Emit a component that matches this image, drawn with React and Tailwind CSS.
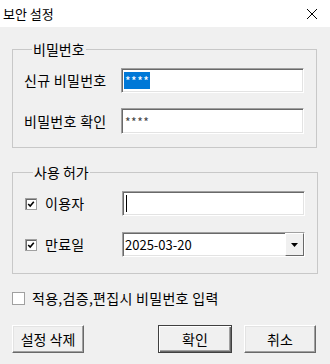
import React from "react";

const font = { fontFamily: '"Noto Sans CJK KR", "Noto Sans", sans-serif' };

function Sunken({ className = "", children }) {
  return (
    <div
      className={
        "bg-white border-t border-l border-[#a0a0a0] border-b border-r border-b-white border-r-white shadow-[inset_1px_1px_0_#696969,inset_-1px_-1px_0_#e3e3e3] " +
        className
      }
    >
      {children}
    </div>
  );
}

function Check({ checked }) {
  return (
    <div className="w-[12px] h-[12px] bg-white border border-[#a0a0a0] shadow-[inset_1px_1px_0_#696969] flex items-center justify-center">
      {checked && (
        <svg width="8" height="8" viewBox="0 0 8 8">
          <path d="M1.2 4 L3.2 6 L6.8 1.8" stroke="#000" strokeWidth="1.6" fill="none" />
        </svg>
      )}
    </div>
  );
}

function Button({ children, def, className = "" }) {
  return (
    <button
      className={
        "h-[28px] bg-[#f0f0f0] text-[14px] text-black flex items-center justify-center " +
        className +
        " " +
        (def
          ? "border border-[#404040] shadow-[inset_1px_1px_0_#fff,inset_-1px_-1px_0_#696969,inset_-2px_-2px_0_#a0a0a0]"
          : "border border-t-white border-l-white border-b-[#696969] border-r-[#696969] shadow-[inset_-1px_-1px_0_#a0a0a0,inset_1px_1px_0_#e3e3e3]")
      }
    >
      {children}
    </button>
  );
}

export default function App() {
  return (
    <div className="w-[330px] h-[364px] bg-[#f0f0f0] text-black flex flex-col" style={font}>
      <div className="h-[27px] bg-white flex items-center justify-between pl-[3px] pr-[12px]">
        <span className="text-[13px] leading-none">보안 설정</span>
        <svg width="12" height="12" viewBox="0 0 12 12">
          <path d="M1 1 L11 11 M11 1 L1 11" stroke="#000" strokeWidth="1" />
        </svg>
      </div>

      <div className="flex flex-col px-[12px] pt-[12px]">
        <fieldset className="border border-[#c8c8c8] w-[305px] pl-[11px] pb-[13px]">
          <legend className="ml-[8px] px-[1px] text-[14px] leading-[20px]">비밀번호</legend>
          <div className="grid grid-cols-[97px_183px] gap-y-[15px] items-center pt-[9px]">
            <span className="text-[14px] tracking-[0.3px]">신규 비밀번호</span>
            <Sunken className="h-[25px] flex items-center pl-[2px]">
              <span className="bg-[#0078d7] text-white text-[12px] leading-[17px] px-[1px] tracking-[0.5px]">****</span>
            </Sunken>
            <span className="text-[14px] tracking-[0.3px]">비밀번호 확인</span>
            <Sunken className="h-[26px] flex items-center pl-[3px]">
              <span className="text-[#444] text-[12px] leading-[17px] tracking-[0.5px]">****</span>
            </Sunken>
          </div>
        </fieldset>

        <fieldset className="border border-[#c8c8c8] w-[306px] mt-[14px] pl-[12px] pb-[16px]">
          <legend className="ml-[8px] px-[1px] text-[14px] leading-[20px]">사용 허가</legend>
          <div className="grid grid-cols-[97px_183px] gap-y-[16px] items-center pt-[9px]">
            <div className="flex items-center gap-[8px]">
              <Check checked />
              <span className="text-[14px] tracking-[0.3px]">이용자</span>
            </div>
            <Sunken className="h-[25px] flex items-center pl-[3px]">
              <div className="w-px h-[17px] bg-black" />
            </Sunken>
            <div className="flex items-center gap-[8px]">
              <Check checked />
              <span className="text-[14px] tracking-[0.3px]">만료일</span>
            </div>
            <Sunken className="h-[25px] flex items-center justify-between">
              <span className="text-[13px] pl-[2px]">2025-03-20</span>
              <div className="w-[19px] h-full bg-[#f0f0f0] border border-t-white border-l-white border-b-[#696969] border-r-[#696969] flex items-center justify-center">
                <svg width="7" height="4" viewBox="0 0 7 4">
                  <path d="M0 0 L7 0 L3.5 4 Z" fill="#000" />
                </svg>
              </div>
            </Sunken>
          </div>
        </fieldset>

        <div className="flex items-center gap-[7px] mt-[14px] h-[20px]">
          <div className="w-[13px] h-[13px] bg-white border border-[#a0a0a0]" />
          <span className="text-[14px] tracking-[0.3px]">적용,검증,편집시 비밀번호 입력</span>
        </div>

        <div className="flex items-center mt-[17px]">
          <Button className="w-[72px]">설정 삭제</Button>
          <div className="ml-auto flex gap-[12px] pr-[2px]">
            <Button def className="w-[74px]">확인</Button>
            <Button className="w-[72px]">취소</Button>
          </div>
        </div>
      </div>
    </div>
  );
}
